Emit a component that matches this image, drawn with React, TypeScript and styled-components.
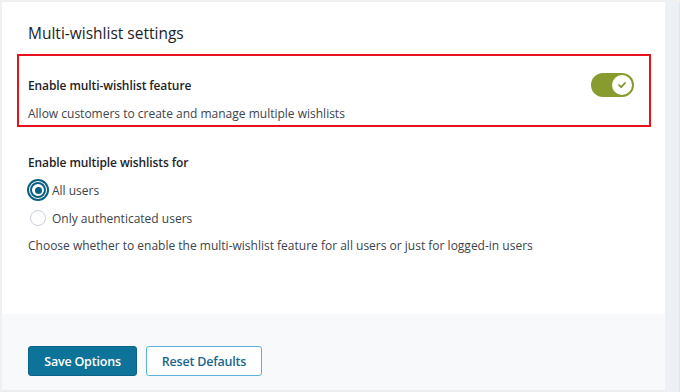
import React from "react"
import styled, { createGlobalStyle } from "styled-components"

const GlobalStyle = createGlobalStyle`
  html, body {
    margin: 0;
    padding: 0;
    background: #f0f0f1;
  }
  body {
    font-family: "Open Sans", "Noto Sans", sans-serif;
    color: #1d2327;
  }
`

export default function App() {
  const [enabled, setEnabled] = React.useState(true)
  const [audience, setAudience] = React.useState("all")

  return (
    <>
      <GlobalStyle />
      <StyledPage>
        <StyledMain>
          <StyledCard>
            <StyledTitle>Multi-wishlist settings</StyledTitle>
            <StyledHighlight>
              <StyledFieldRow>
                <StyledLabel>Enable multi-wishlist feature</StyledLabel>
                <StyledToggle $on={enabled} onClick={() => setEnabled(!enabled)}>
                  <StyledKnob $on={enabled}>
                    <svg width="10" height="10" viewBox="0 0 10 10">
                      <path
                        d="M2 5.2 L4.2 7.2 L8 3"
                        fill="none"
                        stroke="#7f942a"
                        strokeWidth="1.8"
                        strokeLinecap="round"
                        strokeLinejoin="round"
                      />
                    </svg>
                  </StyledKnob>
                </StyledToggle>
              </StyledFieldRow>
              <StyledHelp>Allow customers to create and manage multiple wishlists</StyledHelp>
            </StyledHighlight>

            <StyledSection>
              <StyledLabel>Enable multiple wishlists for</StyledLabel>
              <StyledRadioList>
                <StyledRadioRow onClick={() => setAudience("all")}>
                  <StyledRadio $checked={audience === "all"} />
                  All users
                </StyledRadioRow>
                <StyledRadioRow onClick={() => setAudience("auth")}>
                  <StyledRadio $checked={audience === "auth"} />
                  Only authenticated users
                </StyledRadioRow>
              </StyledRadioList>
              <StyledHelp>
                Choose whether to enable the multi-wishlist feature for all users or just for logged-in users
              </StyledHelp>
            </StyledSection>
          </StyledCard>

          <StyledFooter>
            <StyledPrimaryButton>Save Options</StyledPrimaryButton>
            <StyledSecondaryButton>Reset Defaults</StyledSecondaryButton>
          </StyledFooter>
        </StyledMain>
        <StyledScrollStrip />
      </StyledPage>
    </>
  )
}

const StyledPage = styled.div`
  display: flex;
  width: 680px;
  height: 392px;
  padding: 2px 0 0 2px;
  box-sizing: border-box;
  background: #f0f0f1;
  overflow: hidden;
`

const StyledMain = styled.div`
  width: 663px;
  display: flex;
  flex-direction: column;
`

const StyledCard = styled.div`
  height: 312px;
  box-sizing: border-box;
  background: #ffffff;
  padding: 20px 14px 0 15px;
`

const StyledTitle = styled.h2`
  margin: 0 0 10px 11px;
  font-size: 15.5px;
  line-height: 22px;
  font-weight: 400;
  color: #1d2327;
`

const StyledHighlight = styled.div`
  border: 2px solid #e8111b;
  padding: 20px 15px 1px 9px;
`

const StyledFieldRow = styled.div`
  display: flex;
  align-items: center;
  justify-content: space-between;
  height: 20px;
  margin-bottom: 8px;
`

const StyledLabel = styled.div`
  font-size: 12px;
  line-height: 20px;
  font-weight: 600;
  letter-spacing: -0.1px;
  color: #1d2327;
`

const StyledHelp = styled.p`
  margin: 0;
  font-size: 12px;
  line-height: 20px;
  color: #3c434a;
`

const StyledToggle = styled.button<{ $on: boolean }>`
  position: relative;
  width: 43px;
  height: 24px;
  margin-top: -3px;
  padding: 0;
  border: none;
  border-radius: 12px;
  background: ${props => (props.$on ? "#879b2e" : "#c3c4c7")};
  cursor: pointer;
`

const StyledKnob = styled.span<{ $on: boolean }>`
  position: absolute;
  top: 2px;
  left: ${props => (props.$on ? "21px" : "2px")};
  width: 20px;
  height: 20px;
  box-sizing: border-box;
  border-radius: 50%;
  background: #ffffff;
  display: flex;
  align-items: center;
  justify-content: center;
`

const StyledSection = styled.div`
  padding: 26px 0 0 11px;
`

const StyledRadioList = styled.div`
  display: flex;
  flex-direction: column;
  margin: 3px 0 4px;
`

const StyledRadioRow = styled.label`
  display: flex;
  align-items: center;
  gap: 6px;
  height: 28px;
  font-size: 12px;
  color: #3c434a;
  cursor: pointer;
`

const StyledRadio = styled.span<{ $checked: boolean }>`
  width: 16px;
  height: 16px;
  margin-left: 2px;
  box-sizing: border-box;
  border-radius: 50%;
  display: flex;
  align-items: center;
  justify-content: center;
  background: #ffffff;
  border: ${props => (props.$checked ? "2px solid #0b5f82" : "1px solid #c9d1db")};
  box-shadow: ${props =>
    props.$checked ? "0 0 0 1px #ffffff, 0 0 0 3px #0b5f82" : "none"};
  &::after {
    content: "";
    display: ${props => (props.$checked ? "block" : "none")};
    width: 7px;
    height: 7px;
    border-radius: 50%;
    background: #0b5f82;
  }
`

const StyledFooter = styled.div`
  flex: 1;
  display: flex;
  align-items: flex-start;
  gap: 9px;
  padding: 32px 0 0 26px;
  background: #f8f9fa;
  border-bottom: 2px solid #eceeef;
`

const StyledButtonBase = styled.button`
  height: 30px;
  border-radius: 3px;
  font-family: "Open Sans", "Noto Sans", sans-serif;
  font-size: 12.5px;
  font-weight: 600;
  letter-spacing: -0.2px;
  cursor: pointer;
`

const StyledPrimaryButton = styled(StyledButtonBase)`
  width: 109px;
  border: 1px solid #0a6388;
  background: #0e7398;
  color: #ffffff;
`

const StyledSecondaryButton = styled(StyledButtonBase)`
  width: 116px;
  border: 1px solid #5bb1dc;
  background: #ffffff;
  color: #1a6690;
`

const StyledScrollStrip = styled.div`
  flex: 1;
  background: #edf0f5;
  border-right: 1px solid #e2e5ea;
`
